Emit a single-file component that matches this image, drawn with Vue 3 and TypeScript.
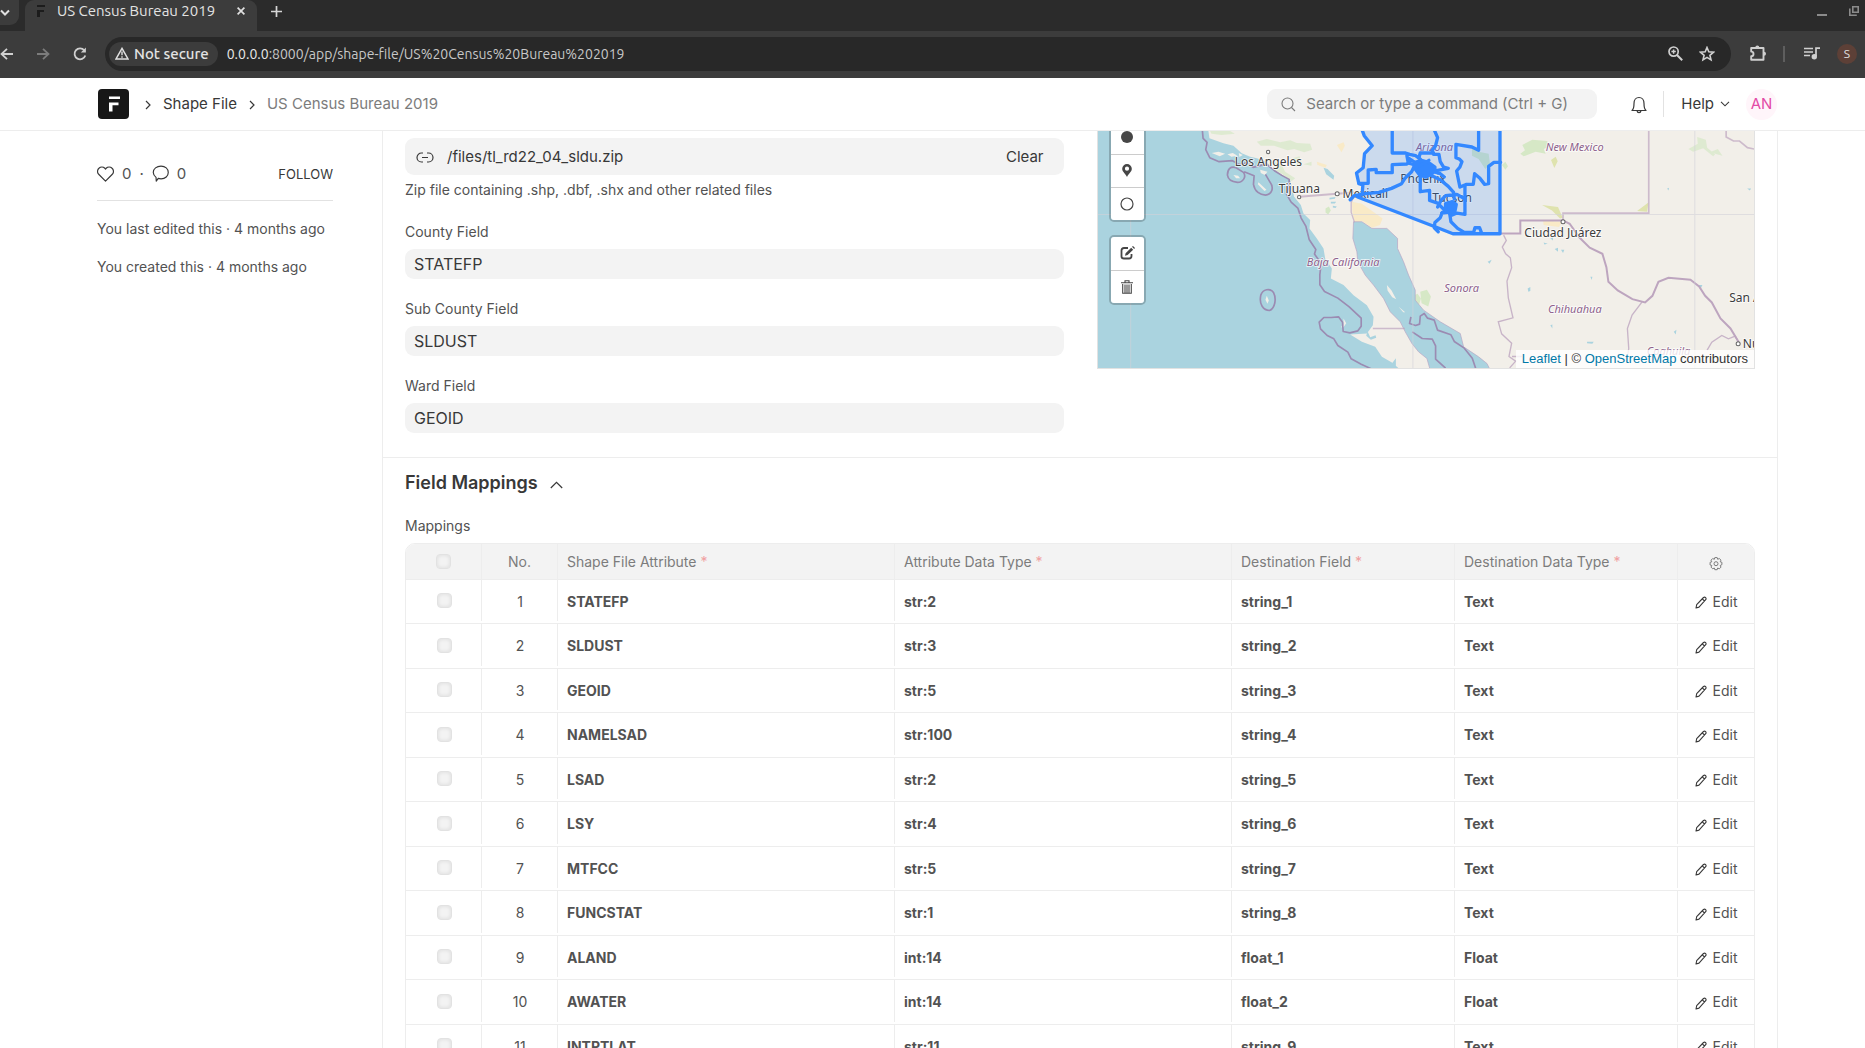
<script setup lang="ts">
interface Mapping {
  attribute: string
  dataType: string
  field: string
  fieldType: string
}

const county = 'STATEFP'
const subCounty = 'SLDUST'
const ward = 'GEOID'

const columns: string[] = [
  'Shape File Attribute',
  'Attribute Data Type',
  'Destination Field',
  'Destination Data Type',
]

const mappings: Mapping[] = [
  { attribute: 'STATEFP', dataType: 'str:2', field: 'string_1', fieldType: 'Text' },
  { attribute: 'SLDUST', dataType: 'str:3', field: 'string_2', fieldType: 'Text' },
  { attribute: 'GEOID', dataType: 'str:5', field: 'string_3', fieldType: 'Text' },
  { attribute: 'NAMELSAD', dataType: 'str:100', field: 'string_4', fieldType: 'Text' },
  { attribute: 'LSAD', dataType: 'str:2', field: 'string_5', fieldType: 'Text' },
  { attribute: 'LSY', dataType: 'str:4', field: 'string_6', fieldType: 'Text' },
  { attribute: 'MTFCC', dataType: 'str:5', field: 'string_7', fieldType: 'Text' },
  { attribute: 'FUNCSTAT', dataType: 'str:1', field: 'string_8', fieldType: 'Text' },
  { attribute: 'ALAND', dataType: 'int:14', field: 'float_1', fieldType: 'Float' },
  { attribute: 'AWATER', dataType: 'int:14', field: 'float_2', fieldType: 'Float' },
  { attribute: 'INTPTLAT', dataType: 'str:11', field: 'string_9', fieldType: 'Text' },
]
</script>

<template>
  <div class="screen">
    <div class="browser">
      <div class="tabs">
        <button class="tab-search" aria-label="Search tabs">
          <svg width="10" height="8" viewBox="0 0 10 8"><path d="M1 1.5 5 5.5 9 1.5" fill="none" stroke="#e0e0e0" stroke-width="2" /></svg>
        </button>
        <div class="tab">
          <svg class="favicon" width="9" height="12" viewBox="0 0 9 12"><path d="M0 0h8v2H0zM0 5h7v2H3v5H0z" fill="#1c1c1c" /></svg>
          <span class="tab-title">US Census Bureau 2019</span>
          <button class="bare tab-close" aria-label="Close tab">
            <svg width="8" height="8" viewBox="0 0 8 8"><path d="M.6.6 7.4 7.4M7.4.6.6 7.4" stroke="#e0e0e0" stroke-width="1.7" /></svg>
          </button>
        </div>
        <button class="bare new-tab" aria-label="New tab">
          <svg width="11" height="11" viewBox="0 0 11 11"><path d="M5.5 0v11M0 5.5h11" stroke="#d6d6d6" stroke-width="1.7" /></svg>
        </button>
        <div class="window-buttons">
          <button class="bare" aria-label="Minimize">
            <svg width="10" height="10" viewBox="0 0 10 10"><path d="M0 9h10" stroke="#8b8b8b" stroke-width="2" /></svg>
          </button>
          <button class="bare" aria-label="Restore">
            <svg width="10" height="10" viewBox="0 0 10 10"><path d="M3.8.8h5.4v5.4H3.8zM.8 2.5v6.7h7" fill="none" stroke="#8b8b8b" stroke-width="1.6" /></svg>
          </button>
        </div>
      </div>
      <div class="toolbar">
        <button class="bare" aria-label="Back">
          <svg width="13" height="12" viewBox="0 0 13 12"><path d="M13 6H1.5M7 .8 1.5 6 7 11.2" fill="none" stroke="#d0d0d0" stroke-width="1.8" /></svg>
        </button>
        <button class="bare forward" aria-label="Forward">
          <svg width="13" height="12" viewBox="0 0 13 12"><path d="M0 6h11.5M6 .8 11.5 6 6 11.2" fill="none" stroke="#7c7c7c" stroke-width="1.8" /></svg>
        </button>
        <button class="bare reload" aria-label="Reload">
          <svg width="14" height="14" viewBox="0 0 14 14"><path d="M11.3 3.3A5.5 5.5 0 1 0 12.3 8.5" fill="none" stroke="#d0d0d0" stroke-width="1.8" /><path d="M12.9.5v5.1H7.8z" fill="#d0d0d0" /></svg>
        </button>
        <div class="address">
          <button class="chip">
            <svg width="14" height="13" viewBox="0 0 14 13"><path d="M7 1.4 13 12H1z" fill="none" stroke="#e0e0e0" stroke-width="1.5" /><path d="M7 4.5v3.7M7 9.2v1.5" stroke="#e0e0e0" stroke-width="1.4" /></svg>
            Not secure
          </button>
          <span class="url"><span class="host">0.0.0.0</span>:8000/app/shape-file/US%20Census%20Bureau%202019</span>
          <button class="bare" aria-label="Zoom">
            <svg width="15" height="15" viewBox="0 0 15 15" fill="none" stroke="#d0d0d0"><circle cx="5.6" cy="5.6" r="4.6" stroke-width="1.7" /><path d="M9 9l5.2 5.2" stroke-width="2" /><path d="M5.6 3.4v4.4M3.4 5.6h4.4" stroke-width="1.5" /></svg>
          </button>
          <button class="bare star" aria-label="Bookmark">
            <svg width="16" height="16" viewBox="0 0 16 16"><path d="M8 1.5l1.8 4.3 4.700.4-3.6 3.1 1.1 4.6L8 11.4l-4 2.5 1.1-4.6L1.5 6.2l4.7-.4z" fill="none" stroke="#d0d0d0" stroke-width="1.6" /></svg>
          </button>
        </div>
        <button class="bare extensions" aria-label="Extensions">
          <svg width="17" height="17" viewBox="0 0 17 17"><path d="M1.2 3h12.3v11.8H1.2v-3.6a2 2 0 0 0 0-4.6z" fill="none" stroke="#d0d0d0" stroke-width="1.9" stroke-linejoin="round" /><path d="M5.300 2.500a2 2 0 0 1 4 0zM14 6.800a2 2 0 0 1 0 4z" fill="#d0d0d0" /></svg>
        </button>
        <span class="toolbar-divider"></span>
        <button class="bare media" aria-label="Media controls">
          <svg width="16" height="13" viewBox="0 0 16 13"><path d="M0 1.5h9M0 5h9M0 8.500h6M12 9V1.2h4" fill="none" stroke="#d0d0d0" stroke-width="1.7" /><circle cx="10.3" cy="9.8" r="2.7" fill="#d0d0d0" /></svg>
        </button>
        <button class="profile" aria-label="Profile">S</button>
      </div>
    </div>

    <header class="navbar">
      <a class="logo" href="#" aria-label="Home">
        <svg width="31" height="30" viewBox="0 0 31 30"><rect width="31" height="30" rx="4" fill="#171717" /><path d="M11 7.500h11v2.600H11zM11 13.500h9.500v2.700H14.500V22.500H11z" fill="#fff" /></svg>
      </a>
      <svg class="crumb-arrow" width="6" height="10" viewBox="0 0 6 10"><path d="M1 1l4 4-4 4" fill="none" stroke="#383838" stroke-width="1.2" /></svg>
      <a class="crumb" href="#">Shape File</a>
      <svg class="crumb-arrow" width="6" height="10" viewBox="0 0 6 10"><path d="M1 1l4 4-4 4" fill="none" stroke="#383838" stroke-width="1.2" /></svg>
      <span class="crumb current">US Census Bureau 2019</span>
      <label class="search">
        <svg width="15" height="15" viewBox="0 0 15 15" fill="none" stroke="#7c7c7c" stroke-width="1.1"><circle cx="6.5" cy="6.5" r="5.5" /><path d="M10.5 10.5 14 14" /></svg>
        <input type="text" placeholder="Search or type a command (Ctrl + G)" aria-label="Search" />
      </label>
      <button class="bare bell" aria-label="Notifications">
        <svg width="16" height="18" viewBox="0 0 16 18" fill="none" stroke="#383838" stroke-width="1.2"><path d="M1 14.5c1.6-1.3 2-2.5 2-7C3 4 5 1.5 8 1.5s5 2.5 5 6c0 4.5.4 5.7 2 7z" stroke-linejoin="round" /><path d="M6 14.7c.2 1.5 1 2 2 2s1.8-.5 2-2" /></svg>
      </button>
      <span class="nav-divider"></span>
      <button class="bare help">
        Help
        <svg width="10" height="6" viewBox="0 0 10 6"><path d="M1 .8l4 4 4-4" fill="none" stroke="#383838" stroke-width="1.1" /></svg>
      </button>
      <button class="avatar" aria-label="Account">AN</button>
    </header>

    <main class="page">
      <aside class="sidebar">
        <div class="stats">
          <svg width="17" height="16" viewBox="0 0 16 15"><path d="M8 14.2 1.8 8A4 4 0 0 1 1.8 2.1 4 4 0 0 1 7.4 2.1L8 2.8l.6-.7a4 4 0 0 1 5.6 0A4 4 0 0 1 14.2 8z" fill="none" stroke="#383838" stroke-width="1.1" stroke-linejoin="round" /></svg>
          <span>0</span>
          <span class="dot">·</span>
          <svg width="17" height="17" viewBox="0 0 16 16"><path d="M8.500 1C12.500 1 15.300 3.600 15.300 7S12.500 13 8.500 13c-1 0-1.800-.1-2.600-.4L4 15.200 3.800 11.600C2.400 10.400 1.200 9 1.200 7c0-3.400 3.200-6 7.300-6z" fill="none" stroke="#383838" stroke-width="1.1" stroke-linejoin="round" /></svg>
          <span>0</span>
          <button class="bare follow">FOLLOW</button>
        </div>
        <p class="activity">You last edited this · 4 months ago</p>
        <p class="activity">You created this · 4 months ago</p>
      </aside>

      <form class="form" @submit.prevent>
        <section class="section fields">
          <div class="column">
            <div class="attach">
              <svg width="18" height="11" viewBox="0 0 18 11" fill="none" stroke="#383838" stroke-width="1.2"><path d="M7 1H5.500a4.500 4.500 0 0 0 0 9H7M11 1h1.500a4.500 4.500 0 0 1 0 9H11M6 5.500h6" /></svg>
              <a href="#">/files/tl_rd22_04_sldu.zip</a>
              <button class="bare clear" type="button">Clear</button>
            </div>
            <p class="hint">Zip file containing .shp, .dbf, .shx and other related files</p>
            <div class="field">
              <label for="county">County Field</label>
              <input id="county" type="text" :value="county" />
            </div>
            <div class="field">
              <label for="sub-county">Sub County Field</label>
              <input id="sub-county" type="text" :value="subCounty" />
            </div>
            <div class="field">
              <label for="ward">Ward Field</label>
              <input id="ward" type="text" :value="ward" />
            </div>
          </div>

          <div class="map">
            <svg class="tiles" viewBox="24 18 1968 711" preserveAspectRatio="xMinYMin slice">
              <rect x="24" y="18" width="2200" height="720" fill="#f2efe9" />
              <g fill="#d6e8c6">
                <path d="M500 50l30-8 40 10 30-6 20 8 40 2 6 18-24 8-30-10-20 4-40-14-40 0z" opacity=".7" />
                <path d="M360 18h60l14 8-40 4-30-4z" opacity=".7" />
                <path d="M555 110l20 10 10 20 30 20-10 8-30-22-20-10zM608 100l20-6 8 24-18 8zM640 118l24-8v12z" opacity=".7" />
                <path d="M706 250l10-6 6 12-8 12-8-6zM1296 60l30-16 44 4 10 16-20 8 6 14-30-6-36 14-10-8 14-10z" />
                <path d="M990 500l20-6 12 20-8 30-20-10zM968 512l14-6 10 14-8 28-14-6zM1235 120l10-10 8 14-8 10zM1145 70l20 10 30 6 4 30-14 16-20-30-20-10z" />
                <path d="M1820 36l26 8 4 24 24 20-6 6-30-24-30 10-14-8 28-16zM1862 80l20-8 14 20-22-6z" opacity=".7" />
              </g>
              <g fill="#dfe3ae">
                <path d="M1355 240l48 6 14 32-8 2-24-24zM1382 105l14-10 6 14-10 20zM1640 258l34-26-4 28z" />
              </g>
              <g fill="#fae9c3">
                <path d="M785 230l30 6 62 44-8 20-24 8-30-20-20 8-8-30zM1358 286l56 4-8 16-46-6zM740 60l20-8 4 10-10 20zM680 110l30 10-4 8-24-8z" opacity=".9" />
              </g>
              <path fill="#aad3df" d="M24 18H355L358 40 400 55 430 62 455 85 480 95 500 100 530 110 545 130 575 150 600 165 607 190 612 215 632 240 640 265 660 285 658 310 680 340 700 370 705 400 725 430 722 460 760 480 790 510 830 540 850 575 848 600 830 625 780 628 815 650 855 665 875 695 905 712 925 729 24 729z" />
              <path fill="#aad3df" stroke="#b7a5c4" stroke-width="2" d="M790 290l25 0 30 20 45 0 32 30 0 30 18 40 15 40 20 45 0 30 25 30 50 35 60 35 10 40 45 30 25 20 10 20H1020L1010 700 985 680 965 655 945 620 930 590 900 560 880 520 850 480 825 450 803 410 800 380 788 340z" />
              <g fill="#aad3df">
                <path d="M700 128l12 4 20 20-2 12-22-16zM718 218l18-2-2 5-16 2zM722 230l16 0-4 5-12 0zM728 242l12 2-4 5-8-2zM832 618l8 18 16-6 2 8-16 6-14-12zM905 715l12-16v24z" />
                <path d="M1380 340l8-4v10zM1393 372l10-4 0 12zM1412 374l10 0-4 10zM1360 352l12 4-10 2zM1312 490l8-4 0 12-6 2zM1380 600l6-2v12zM1192 410l12-6-6 12zM1730 190l6-2-2 8zM1820 480l16 0-4 8zM1750 620l8-6-2 14zM1490 650l20 0-4 6-16-2zM1500 455l6 0-2 10zM1970 190l12 0-4 6z" />
              </g>
              <g fill="#f2efe9">
                <path d="M365 84l20-4 20 6-16 8zM412 88l16-4 14 8-18 3zM446 84l12 6-10 6zM430 150l14 2 6 8-12 0zM510 134l22 6-8 10-12-6zM505 172l24 22-6 4-20-20zM530 512l6 14-4 10-6-12zM760 580l8 14-8 12-8 0 8-8zM890 480l14 16 14 26-12-6-14-20zM925 545l20 16-6 0z" />
              </g>
              <g fill="none" stroke="#9b8bb2" stroke-width="5" stroke-linejoin="round">
                <path d="M337 18l2 22 12 12-4 22 12 24 28 12 40-3 22 12 20-6 20 14 40-10 24 20 22 14 22 12 0 24-8 20 14 24 20 18 10 30 14 24 10 40 20 30-4 14 20 28-4 34 0 30 14 20 40 20 34 26 36 34 0 24-10 14-24 6-20-4-2-28-12-16-22 2-22 0-14 14 4 20 20 20 20 10 12 20 30 20 10 20 30 16 30 14 12 16" />
                <path d="M412 150c0-18 10-28 26-22l22 14c10 14-2 30-18 30-16-2-28-8-30-22zM462 140l30 12-2 26c4 22 20 32 36 32 20-2 26-22 14-38l-14-24" />
                <path d="M512 510c6-18 28-22 38-8 10 20 4 48-12 54-18 0-32-18-26-46z" />
                <path d="M962 575l-4 20 18 6 12-4 2-24 12-8 10 14 20 6 10 30 40 14 10 20 30 20 24 30 10 30M966 620l30 20 30 2 10 20 0 40 30 27" />
              </g>
              <g fill="none" stroke="#bda5bf">
                <path d="M628 215l112-9 52-4" stroke-width="6" opacity=".7" />
                <path d="M793 210l-10 22 0 30 10 30M848 610h96" stroke-width="4" opacity=".7" />
                <path d="M1220 325h70v-39h128l20 10 30 42 30 30 38 18 12 40 6 44 28 26 44 26 38 10 22-20 18-42 30-12 66 6 26 20 18 28 20 20 26 48 30 30 24 40" stroke-width="6" />
                <path d="M1418 286v-22h257V18" stroke-width="5" opacity=".7" />
                <path d="M1240 330l8 16-12 20 10 20 14 12 4 30-14 40 4 50 14 60-44 12 10 36 30 28-8 40 20 14-18 20M1655 530l-30 40-14 40 4 60-6 40M1265 694h30M1850 675l14-24 30-20 20 10 20-8 12 20" stroke-width="4" opacity=".8" />
                <path d="M1907 18v18l22 12 18 0 24 20 30 6" stroke-width="5" opacity=".7" />
              </g>
              <g stroke="#d3d2da" stroke-width="3" opacity=".6">
                <path d="M24 268H2200M122 18V729M968 18V729M1813 18V729" />
              </g>
              <g class="place">
                <text x="434" y="122">Los Angeles</text>
                <text x="566" y="204">Tijuana</text>
                <text x="757" y="220">Mexicali</text>
                <text x="930" y="173">Phoenix</text>
                <text x="1026" y="230">Tucson</text>
                <text x="1302" y="335">Ciudad Juárez</text>
                <text x="1916" y="531">San Antonio</text>
                <text x="1957" y="668">Nuevo Laredo</text>
              </g>
              <g class="region">
                <text x="977" y="78">Arizona</text>
                <text x="1366" y="79">New Mexico</text>
                <text x="650" y="423">Baja California</text>
                <text x="1062" y="501">Sonora</text>
                <text x="1373" y="563">Chihuahua</text>
                <text x="1669" y="690">Coahuila</text>
              </g>
              <g fill="#fff" stroke="#666" stroke-width="3">
                <circle cx="534" cy="81" r="5" /><circle cx="627" cy="216" r="5" /><circle cx="741" cy="206" r="6" /><circle cx="1418" cy="290" r="6" /><circle cx="1943" cy="656" r="6" />
              </g>
              <g transform="translate(750)" fill="none" stroke="#3388ff" stroke-width="10" stroke-linejoin="round" stroke-linecap="round">
                <path d="M64 10l8 22 24 30-23 24-4 42-20 16 7 32 12 4-2 26-14 10 240 92 46 18H479V10z" fill="#3388ff" fill-opacity=".2" />
                <path d="M56 175h28v-40l24-2v10h48v-24l44-2 10-8" />
                <path d="M156 10v74h40l12 4 18 4 14 10 10 20M200 92l4 22 20 6-10 20-20 20-10 16-30 14-38 12-40 4-34 6-12 12" />
                <path d="M280 10l12 28-6 24-10 14 4 12h16l4 22 10 16 14 4-44 8M240 84h40M240 84l-4 14" />
                <path d="M415 10v66l-20-10-48-8v40l10 4 8 8-6 16-10 12 10 48 20-8h20l4-32 16 14 14 18 12-2v-52l16-12h20" />
                <path d="M374 184v84l-24-4-14 6M240 150v50l28-4v30l24 8 20 20M270 150l30 14 24 20 16 18 2 20M292 246l10-20 14-14 34-4 24 14M306 262l-6 16-16 14-2 16 12 12M328 264l4 26 20 20 20 12 28 0 4-14h14l6 16M304 264l30-4" />
                <path d="M224 112l20-6 20 6 20 14 0 14-26 16-20-6-16-22zM206 100l30 20M226 128l40-22M280 140l20 6 12 10" fill="#3388ff" />
                <path d="M316 236l20-6 12 8-4 20-18 6-10-8z" fill="#3388ff" />
              </g>
            </svg>
            <div class="draw-tools">
              <div class="tool-group">
                <button type="button" aria-label="Draw a circlemarker"><svg width="12" height="12" viewBox="0 0 12 12"><circle cx="6" cy="6" r="6" fill="#464646" /></svg></button>
                <button type="button" aria-label="Draw a marker"><svg width="10" height="13" viewBox="0 0 10 13"><path d="M5 0a4.800 4.800 0 0 1 4.800 4.800C9.800 8 6.500 9.500 5 13 3.500 9.500.2 8 .2 4.800A4.800 4.800 0 0 1 5 0zm0 2.600a2.100 2.100 0 1 0 0 4.200 2.100 2.100 0 0 0 0-4.200z" fill="#464646" /></svg></button>
                <button type="button" aria-label="Draw a circle"><svg width="14" height="14" viewBox="0 0 14 14"><circle cx="7" cy="7" r="6" fill="none" stroke="#464646" stroke-width="1.2" /></svg></button>
              </div>
              <div class="tool-group">
                <button type="button" aria-label="Edit layers"><svg width="15" height="14" viewBox="0 0 15 14"><path d="M8 2H4Q1.500 2 1.500 4.500v6Q1.500 12.500 4 12.500h5q2.500 0 2.500-2.500V8" fill="none" stroke="#464646" stroke-width="1.8" /><path d="M5 9.800l.6-2.600 5.600-5.400 2 2-5.600 5.300zM12 .8l1-.8 2 2-.9.900z" fill="#464646" /></svg></button>
                <button type="button" aria-label="Delete layers"><svg width="12" height="14" viewBox="0 0 12 14"><path d="M0 2.800h12M4 2.500V.7h4v1.800M1.700 4v9.300h8.600V4M4 4.500V13M6 4.500V13M8 4.500V13" fill="none" stroke="#464646" stroke-width="1.100" /></svg></button>
              </div>
            </div>
            <div class="attribution"><a href="#">Leaflet</a> | © <a href="#">OpenStreetMap</a> contributors</div>
          </div>
        </section>

        <section class="section mappings">
          <h2>
            Field Mappings
            <svg width="13" height="8" viewBox="0 0 13 8"><path d="M.8 7 6.500 1.300 12.200 7" fill="none" stroke="#383838" stroke-width="1.2" /></svg>
          </h2>
          <p class="table-label">Mappings</p>
          <div class="grid">
            <table>
              <colgroup>
                <col class="narrow" /><col class="narrow" /><col class="wide" /><col class="wide" /><col /><col /><col class="narrow" />
              </colgroup>
              <thead>
                <tr>
                  <th><input type="checkbox" aria-label="Select all rows" /></th>
                  <th class="center">No.</th>
                  <th v-for="column in columns" :key="column">{{ column }} <span class="required">*</span></th>
                  <th>
                    <button class="bare gear" type="button" aria-label="Configure columns">
                      <svg width="14" height="14" viewBox="0 0 14 14" fill="none" stroke="#7c7c7c" stroke-width="1"><path d="M5.800.600h2.400l.5 1.700 1.600-.8 1.700 1.700-.8 1.600 1.700.5v2.400l-1.700.8.8 1.600-1.700 1.700-1.600-.8-.5 1.700H5.800l-.5-1.700-1.600.8L2 10.100l.8-1.600L1.100 8V5.300l1.700-.5L2 3.200l1.700-1.700 1.600.8z" stroke-linejoin="round" /><circle cx="7" cy="6.700" r="2" /></svg>
                    </button>
                  </th>
                </tr>
              </thead>
              <tbody>
                <tr v-for="(row, index) in mappings" :key="row.attribute">
                  <td><input type="checkbox" :aria-label="'Select row ' + (index + 1)" /></td>
                  <td class="center">{{ index + 1 }}</td>
                  <td class="value">{{ row.attribute }}</td>
                  <td class="value">{{ row.dataType }}</td>
                  <td class="value">{{ row.field }}</td>
                  <td class="value">{{ row.fieldType }}</td>
                  <td>
                    <button class="bare edit" type="button">
                      <svg width="12" height="13" viewBox="0 0 12 13"><path d="M1 12l.7-3.300L8.500 1.500q1.200-.8 2.100.1.900 1 .1 2.100L4 11.100zM7.300 2.800l2.200 2.200" fill="none" stroke="#383838" stroke-width="1.1" stroke-linejoin="round" /></svg>
                      Edit
                    </button>
                  </td>
                </tr>
              </tbody>
            </table>
          </div>
        </section>
      </form>
    </main>
  </div>
</template>

<style>
body {
  margin: 0;
  overflow: hidden;
}
</style>

<style scoped>
.screen {
  height: 100vh;
  overflow: hidden;
  background: #fff;
  color: #383838;
  font: 15px/18px Inter, sans-serif;
}
.screen * {
  box-sizing: border-box;
}
button,
input {
  font: inherit;
  color: inherit;
}
a {
  color: inherit;
  text-decoration: none;
}
p,
h2 {
  margin: 0;
}
svg {
  display: block;
  flex: none;
}
.bare {
  padding: 0;
  border: 0;
  background: none;
}

/* Browser chrome */
.browser {
  background: #3c3c3c;
  color: #e3e3e3;
  font: 15px/20px Ubuntu, "Noto Sans", sans-serif;
}
.tabs {
  display: flex;
  height: 31px;
  background: #2b2b2b;
}
.tab-search {
  width: 19px;
  height: 25px;
  padding: 0;
  border: 0;
  border-radius: 0 0 9px 0;
  background: #3c3c3c;
}
.tab {
  display: flex;
  align-items: center;
  width: 232px;
  margin-left: 6px;
  padding: 0 12px 9px;
  border-radius: 9px 9px 0 0;
  background: #3c3c3c;
}
.tab-title {
  flex: 1;
  margin-left: 11px;
  white-space: nowrap;
}
.new-tab {
  margin: 0 0 9px 14px;
}
.window-buttons {
  display: flex;
  align-items: flex-start;
  gap: 22px;
  margin-left: auto;
  padding: 6px 6px 0 0;
}
.toolbar {
  display: flex;
  align-items: center;
  height: 47px;
  padding: 0 8px 2px 0;
}
.forward {
  margin-left: 24px;
}
.reload {
  margin-left: 23px;
}
.address {
  display: flex;
  flex: 1;
  align-items: center;
  height: 34px;
  margin-left: 18px;
  padding: 0 16px 0 4px;
  border-radius: 17px;
  background: #282828;
}
.chip {
  display: flex;
  align-items: center;
  gap: 5px;
  height: 24px;
  padding: 0 9px 0 6px;
  border: 0;
  border-radius: 12px;
  background: #3c3c3c;
  font-weight: 500;
}
.url {
  flex: 1;
  margin-left: 9px;
  color: #c7c7c7;
  font-size: 14px;
}
.host {
  color: #e8e8e8;
}
.star {
  margin-left: 16px;
}
.extensions {
  margin-left: 19px;
}
.toolbar-divider {
  width: 2px;
  height: 16px;
  margin: 0 19px 0 16px;
  background: #5e5e5e;
}
.profile {
  width: 20px;
  height: 20px;
  margin-left: 17px;
  padding: 0;
  border: 0;
  border-radius: 50%;
  background: #5d4037;
  font-size: 12px;
}

/* Application bar */
.navbar {
  display: flex;
  align-items: center;
  height: 53px;
  padding: 0 88px 0 98px;
  border-bottom: 1px solid #ededed;
}
.crumb-arrow {
  margin: 2px 12px 0 16px;
}
.crumb + .crumb-arrow {
  margin-left: 12px;
}
.current {
  color: #7c7c7c;
}
.search {
  display: flex;
  align-items: center;
  gap: 10px;
  width: 330px;
  height: 30px;
  margin-left: auto;
  padding: 0 14px;
  border-radius: 9px;
  background: #f3f3f3;
}
.search input {
  flex: 1;
  min-width: 0;
  padding: 0;
  border: 0;
  outline: 0;
  background: none;
}
.search input::placeholder {
  color: #7c7c7c;
  opacity: 1;
}
.bell {
  margin: 2px 16px 0 34px;
}
.nav-divider {
  width: 1px;
  height: 26px;
  margin-right: 17px;
  background: #e2e2e2;
}
.help {
  display: flex;
  align-items: center;
  gap: 6px;
}
.avatar {
  width: 31px;
  height: 31px;
  margin-left: 16px;
  padding: 0;
  border: 0;
  border-radius: 50%;
  background: #fff5fa;
  color: #e34aa6;
}

/* Document */
.page {
  display: flex;
  padding: 0 87px 0 97px;
}
.sidebar {
  width: 236px;
  margin-right: 49px;
  color: #525252;
}
.stats {
  display: flex;
  align-items: center;
  height: 70px;
  padding-top: 16px;
  gap: 8px;
  margin-bottom: 19px;
  border-bottom: 1px solid #e2e2e2;
}
.follow {
  margin-left: auto;
  color: #383838;
  font-size: 13px;
}
.activity {
  margin-bottom: 20px;
  font-size: 14px;
  white-space: nowrap;
}
.form {
  flex: 1;
  border: solid #ededed;
  border-width: 0 1px;
}
.section {
  padding: 0 22px;
}
.fields {
  display: grid;
  grid-template-columns: 1fr 1fr;
  align-items: start;
  gap: 33px;
  padding-bottom: 24px;
  border-bottom: 1px solid #ededed;
}
.column {
  padding-top: 7px;
}
.attach {
  display: flex;
  align-items: center;
  height: 37px;
  padding: 1px 20px 0 11px;
  border-radius: 9px;
  background: #f3f3f3;
}
.attach a {
  margin-left: 13px;
}
.clear {
  margin-left: auto;
}
.hint {
  margin: 6px 0 24px;
  color: #525252;
  font-size: 14px;
}
.field {
  margin-bottom: 21px;
}
.field:last-child {
  margin-bottom: 0;
}
.field label,
.table-label {
  display: block;
  margin-bottom: 8px;
  color: #525252;
  font-size: 14px;
}
.field input {
  display: block;
  width: 100%;
  height: 30px;
  padding: 0 9px;
  border: 0;
  border-radius: 9px;
  background: #f3f3f3;
  font-size: 16px;
}

/* Map */
.map {
  position: relative;
  height: 238px;
  overflow: hidden;
  border: solid #e2e2e2;
  border-width: 0 1px 1px;
}
.tiles {
  width: 100%;
  height: 237px;
}
.place {
  fill: #3c3c3c;
  font: 36px "Noto Sans", sans-serif;
}
.region {
  fill: #8d618b;
  font: italic 33px "Noto Sans", sans-serif;
}
.place,
.region {
  paint-order: stroke;
  stroke: #fffc;
  stroke-width: 5px;
}
.draw-tools {
  position: absolute;
  bottom: 63px;
  left: 11px;
}
.tool-group {
  overflow: hidden;
  border: 2px solid #0003;
  border-radius: 5px;
  background-clip: padding-box;
}
.tool-group + .tool-group {
  margin-top: 13px;
}
.tool-group button {
  display: flex;
  align-items: center;
  justify-content: center;
  width: 33px;
  height: 33px;
  padding: 0 0 1px;
  border: 0;
  background: #fff;
}
.tool-group button + button {
  border-top: 1px solid #ccc;
}
.attribution {
  position: absolute;
  right: 0;
  bottom: 0;
  padding: 0 6px;
  background: #fffc;
  color: #333;
  font: 12px/18px "Liberation Sans", Arial, sans-serif;
  font-size: 13px;
}
.attribution a {
  color: #0078a8;
}

/* Mappings table */
.mappings {
  padding-top: 13px;
}
h2 {
  display: flex;
  align-items: center;
  gap: 12px;
  margin-bottom: 22px;
  font-size: 18px;
  font-weight: 600;
  line-height: 24px;
}
h2 svg {
  margin-top: 4px;
}
.grid {
  overflow: hidden;
  border: 1px solid #ededed;
  border-radius: 10px;
}
table {
  width: 100%;
  table-layout: fixed;
  border-spacing: 0;
  color: #525252;
  font-size: 14px;
}
.narrow {
  width: 76px;
}
.wide {
  width: 25%;
}
th,
td {
  height: 44px;
  padding: 0 9px;
  border-bottom: 1px solid #ededed;
  text-align: left;
  white-space: nowrap;
}
th {
  height: 36px;
  background: #f3f3f3;
  color: #7c7c7c;
  font-weight: 400;
}
tr:nth-child(even) td {
  height: 45px;
}
th:not(:last-child) {
  border-right: 1px solid #ededed;
}
td:not(:last-child) {
  background: linear-gradient(#ededed, #ededed) right top / 1px calc(100% - 2px) no-repeat;
}
th.center,
td.center {
  text-align: center;
}
.value {
  font-weight: 700;
}
.required {
  color: #f0a0a0;
}
input[type="checkbox"] {
  display: block;
  width: 15px;
  height: 15px;
  margin: 0 auto;
  border: 1px solid #e2e2e2;
  border-radius: 4px;
  appearance: none;
  background: #f3f3f3;
  box-shadow: inset 0 0 4px #0000001a;
}
td input[type="checkbox"] {
  margin-bottom: 2px;
}
.gear {
  display: block;
  margin: 4px auto 0;
}
.edit {
  display: flex;
  align-items: center;
  gap: 6px;
  margin: 0 auto;
}
.edit svg {
  margin-top: 2px;
}
</style>
